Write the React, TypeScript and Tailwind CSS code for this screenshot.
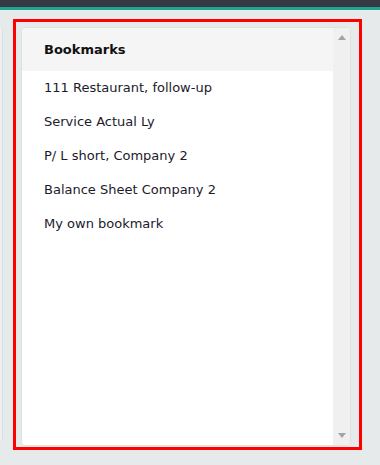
const items = [
  '111 Restaurant, follow-up',
  'Service Actual Ly',
  'P/ L short, Company 2',
  'Balance Sheet Company 2',
  'My own bookmark',
];

export default function App() {
  return (
    <div className="w-[380px] h-[465px] bg-[#e6eaea] overflow-hidden font-['DejaVu_Sans',Verdana,sans-serif]">
      {/* top bar */}
      <div className="h-[7px] bg-[#353a43]" />
      <div className="h-[3px] bg-[#1ea596]" />

      <div className="relative flex">
        {/* previous panel peeking in */}
        <div className="absolute left-0 top-[18px] w-[3px] h-[412px] bg-[#eef0f0] border-r border-[#dcdfdf]" />

        <div className="ml-[13px] mt-[9px] w-[349px] h-[431px] border-[3px] border-[#ff0000] pl-[6px] pt-[6px] overflow-hidden">
          <div className="w-[328px] h-[417px] bg-white rounded-[3px] shadow-[0_0_2px_rgba(0,0,0,0.12)] flex overflow-hidden">
            <div className="flex-1 flex flex-col">
              <div className="h-[43px] bg-[#f5f5f5] flex items-center pl-[22px] pt-[1px]">
                <span className="text-[13px] font-bold text-[#111]">Bookmarks</span>
              </div>
              <ul>
                {items.map((t) => (
                  <li key={t} className="h-[34px] flex items-center pl-[22px] text-[13px] text-[#1b1b2b]">
                    {t}
                  </li>
                ))}
              </ul>
            </div>
            <div className="w-[17px] bg-[#f0f0f0] flex flex-col items-center justify-between py-[7px]">
              <svg width="8" height="5" viewBox="0 0 8 5">
                <path d="M0 5 L4 0 L8 5 Z" fill="#a3a3a3" />
              </svg>
              <svg width="8" height="5" viewBox="0 0 8 5">
                <path d="M0 0 L4 5 L8 0 Z" fill="#a3a3a3" />
              </svg>
            </div>
          </div>
        </div>
      </div>
    </div>
  );
}
